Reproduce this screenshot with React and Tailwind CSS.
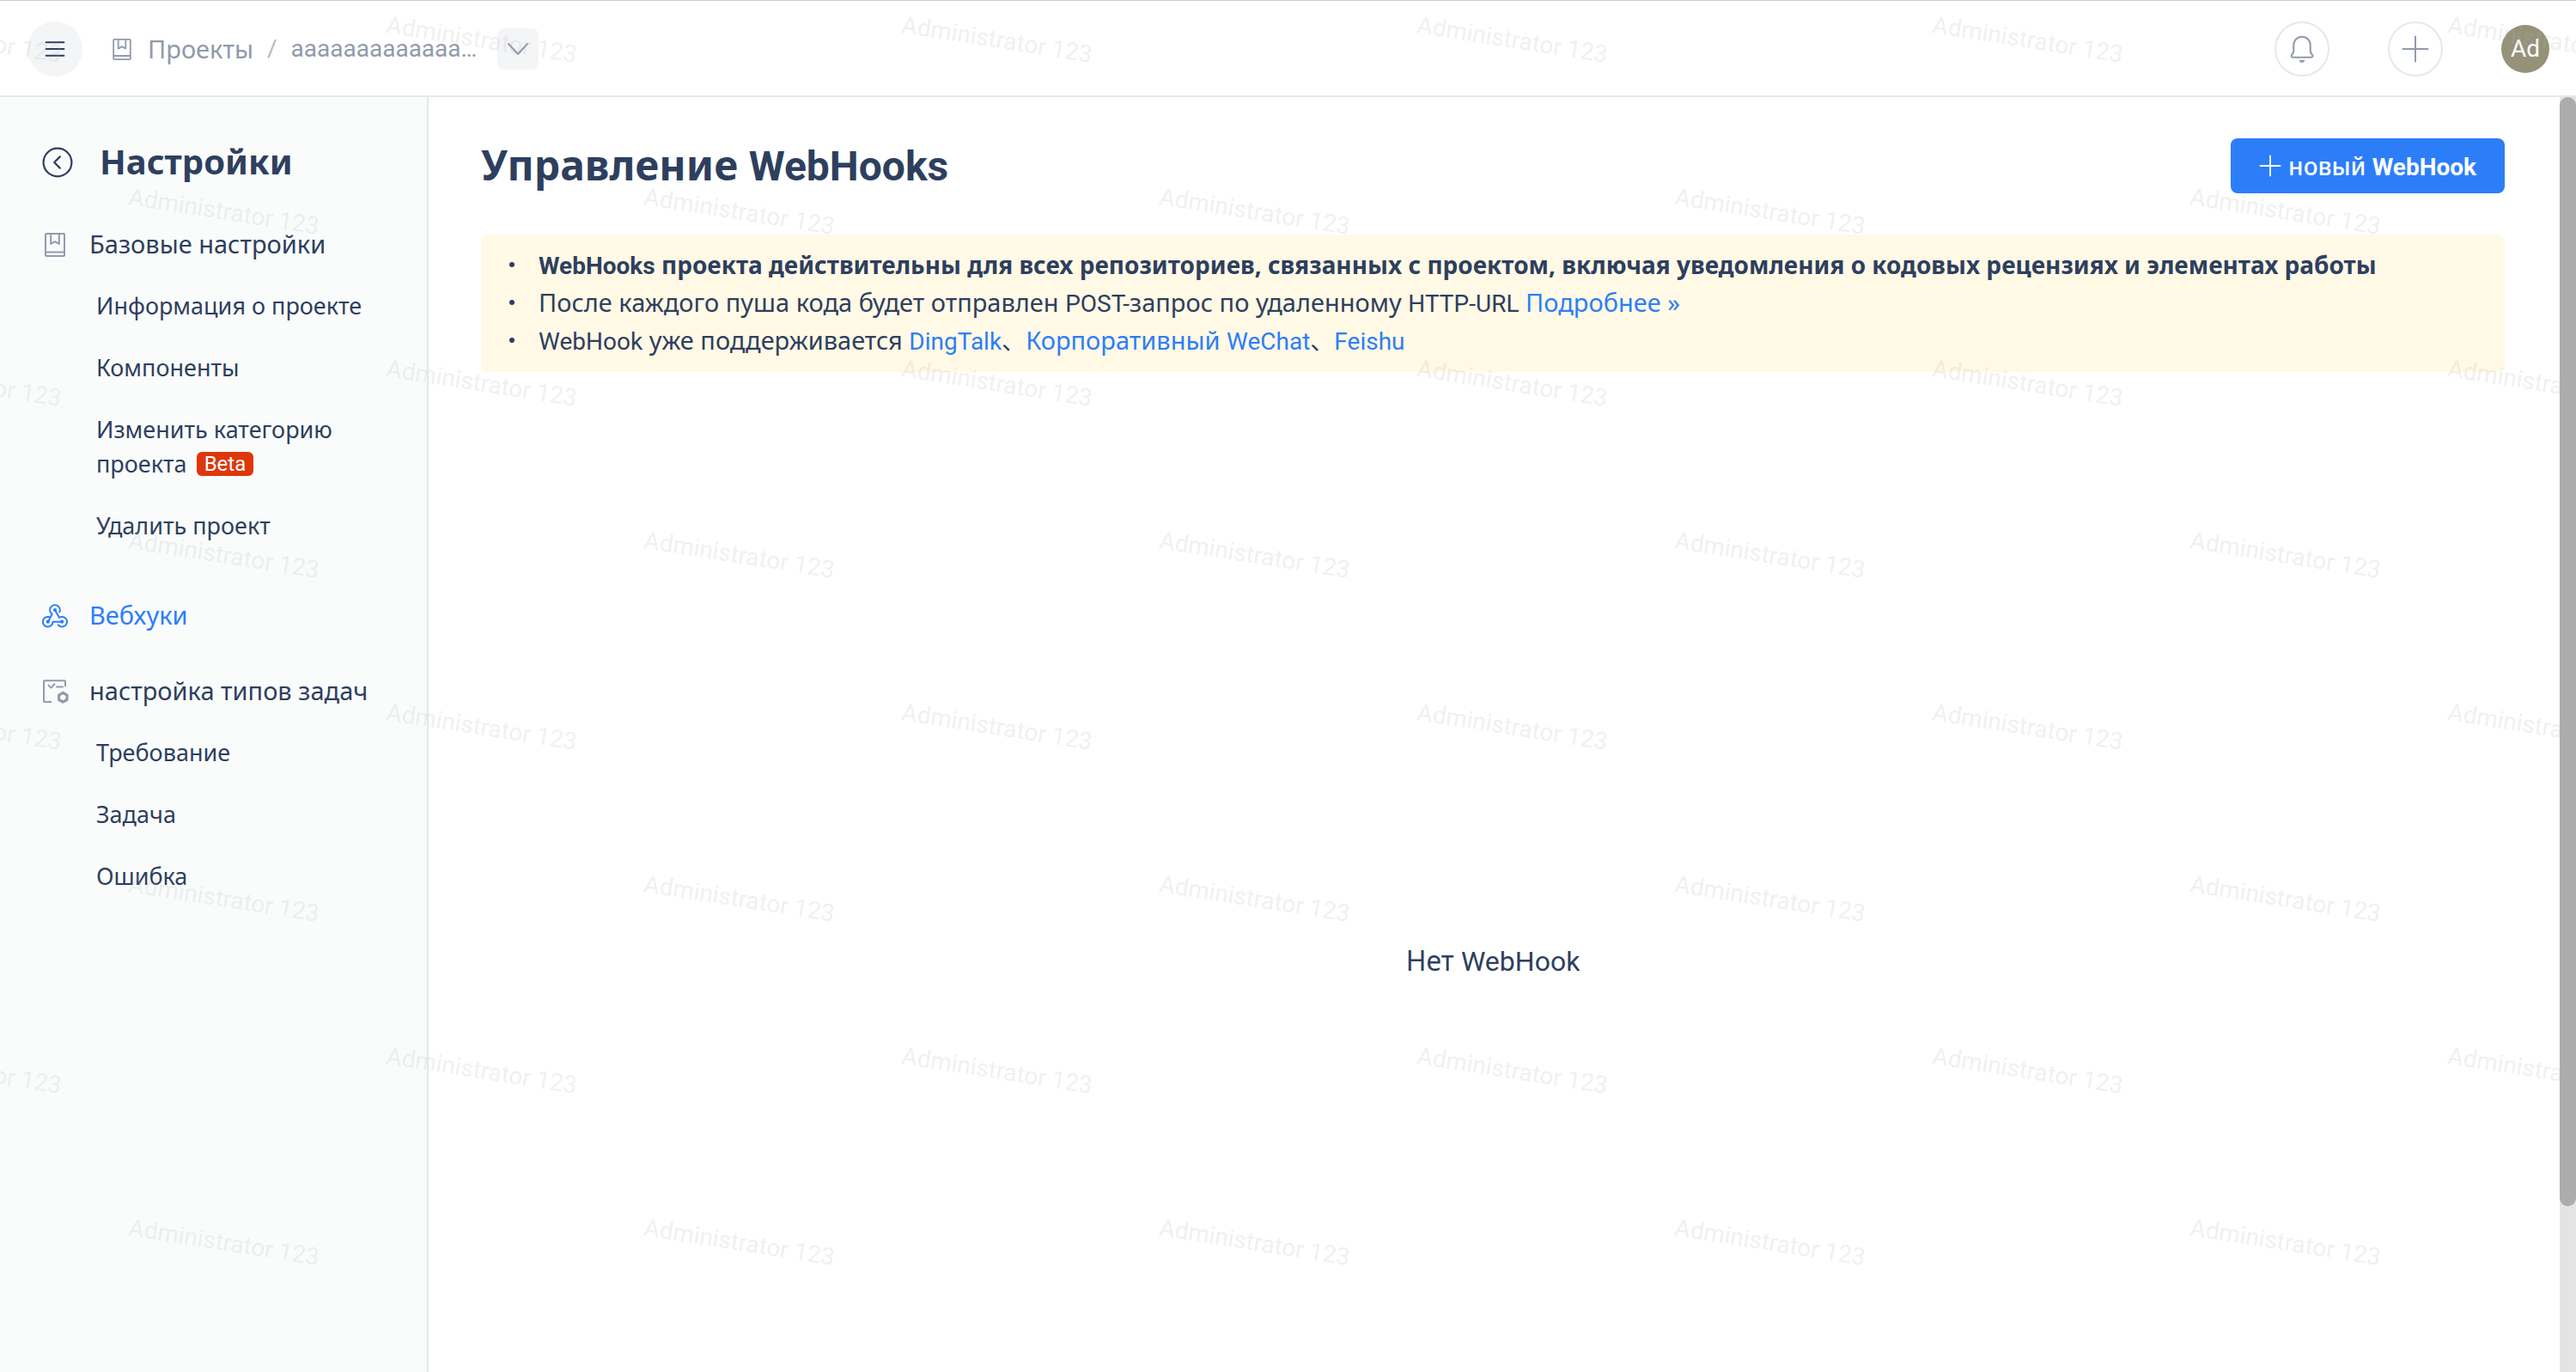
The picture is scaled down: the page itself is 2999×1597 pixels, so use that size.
import React from 'react';

const ROBOTO = 'font-[Roboto,sans-serif] leading-none';

function Lat({ children, className = '' }) {
  return <span className={`${ROBOTO} ${className}`}>{children}</span>;
}

function BookIcon({ className }) {
  return (
    <svg viewBox="0 0 24 28" className={className} fill="none" stroke="currentColor" strokeWidth="2" strokeLinejoin="round" aria-hidden="true">
      <rect x="1" y="1" width="22" height="26" rx="1" />
      <path d="M7.2 1v12l4.8-2.8 4.8 2.8V1M1 22.4h22" />
    </svg>
  );
}

function WebhookIcon() {
  return (
    <svg viewBox="0 0 30 28" className="w-[30px] h-7" fill="none" stroke="currentColor" strokeWidth="2" strokeLinecap="round" strokeLinejoin="round" aria-hidden="true">
      <path d="M20.3 9.3A5.8 5.8 0 1 0 11.7 11.8L6.9 20.7" />
      <path d="M8.7 15.3A5.8 5.8 0 1 0 12.5 20.7H23.2" />
      <path d="M18.8 24.4A5.8 5.8 0 1 0 20 15.9L15 7" />
      <g fill="currentColor" stroke="none">
        <circle cx="15" cy="7" r="2.1" />
        <circle cx="6.8" cy="20.7" r="2.1" />
        <circle cx="23.2" cy="20.7" r="2.1" />
      </g>
    </svg>
  );
}

function TaskTypeIcon() {
  return (
    <svg viewBox="0 0 32 28" className="h-7 w-8 shrink-0" fill="none" stroke="currentColor" strokeWidth="2" strokeLinecap="round" strokeLinejoin="round" aria-hidden="true">
      <path d="M28 7.6V2.200a.9.9 0 0 0-.9-.9H3.900a.9.9 0 0 0-.9.9V25a.9.9 0 0 0 .9.9h7.400" />
      <path d="M8.500 6.600l3 3 4-4.300M18 8.400h7" />
      <path d="M25.300 15.400l4.700 2.700v5.400l-4.700 2.700-4.700-2.700v-5.400z" strokeWidth="3.200" />
    </svg>
  );
}

function BackIcon() {
  return (
    <svg viewBox="0 0 36 36" className="size-9" fill="none" stroke="currentColor" strokeWidth="2.2" strokeLinecap="round" strokeLinejoin="round" aria-hidden="true">
      <circle cx="18" cy="18" r="16.4" />
      <path d="M20.8 11.4L14.2 18l6.600 6.600" />
    </svg>
  );
}

function Header() {
  return (
    <header className="flex h-[113px] shrink-0 items-center border-t border-b-2 border-t-[#cbcbcb] border-b-[#e3e9ed] bg-white pt-0.5 pr-[31px] pl-8">
      <button type="button" aria-label="Меню" className="flex size-16 items-center justify-center rounded-full bg-[#f4f5f7]">
        <svg viewBox="0 0 24 24" className="size-6" fill="none" stroke="#2e3f5e" strokeWidth="2" strokeLinecap="round" aria-hidden="true">
          <path d="M1.600 4.300h20.800M1.600 12h20.800M1.600 19.700h20.800" />
        </svg>
      </button>
      <nav aria-label="Навигация" className="ml-[35px] flex items-center text-[#919aab]">
        <BookIcon className="h-[25px] w-[22px]" />
        <a href="#projects" className="ml-[19px] text-[29px] leading-10">Проекты</a>
        <Lat className="ml-4 text-[28px] text-[#b3bac4]">/</Lat>
        <a href="#project" className="ml-4 font-[Roboto,sans-serif] text-[28px] leading-10">aaaaaaaaaaaaa…</a>
        <button type="button" aria-label="Выбрать проект" className="ml-6 flex size-12 items-center justify-center rounded-lg bg-[#f4f5f7]">
          <svg viewBox="0 0 26 16" className="h-4 w-[26px]" fill="none" stroke="currentColor" strokeWidth="2" strokeLinecap="round" strokeLinejoin="round" aria-hidden="true">
            <path d="M2 2l11 12L24 2" />
          </svg>
        </button>
      </nav>
      <div className="ml-auto flex items-center gap-[68px] text-[#929aae]">
        <button type="button" aria-label="Уведомления" className="flex size-16 items-center justify-center rounded-full border-2 border-[#e3e9ed]">
          <svg viewBox="0 0 32 32" className="size-8" fill="none" stroke="currentColor" strokeWidth="2.1" strokeLinejoin="round" aria-hidden="true">
            <path d="M6.3 18v-6.6a9.7 9.7 0 0 1 19.4 0V18c0 2 .8 3 2.3 5 .9 1.3.3 2.7-1.4 2.7H5.4C3.7 25.7 3.1 24.3 4 23c1.5-2 2.3-3 2.3-5z" />
            <path d="M12.7 29h6.6c-.5 2-1.7 2.8-3.3 2.8s-2.8-.8-3.3-2.8z" fill="currentColor" stroke="none" />
          </svg>
        </button>
        <button type="button" aria-label="Создать" className="flex size-16 items-center justify-center rounded-full border-2 border-[#e3e9ed]">
          <svg viewBox="0 0 32 32" className="size-8" fill="none" stroke="currentColor" strokeWidth="2" strokeLinecap="round" aria-hidden="true">
            <path d="M16 1.5v29M1.5 16h29" />
          </svg>
        </button>
        <button type="button" className="flex size-14 items-center justify-center rounded-full bg-[#959279] font-[Roboto,sans-serif] text-[28px] leading-none text-white">Ad</button>
      </div>
    </header>
  );
}

function Section({ icon, children, className = '' }) {
  return (
    <a href="#section" className={`flex h-[72px] items-center gap-[25px] text-[29px] leading-10 ${className}`}>
      <span className="flex w-[30px] justify-center text-[#929aae]">{icon}</span>
      <span className="pb-0.5">{children}</span>
    </a>
  );
}

function SubItem({ children }) {
  return <li><a href="#item" className="block pt-[15px] pb-[17px] text-[27px] leading-10">{children}</a></li>;
}

function Sidebar() {
  return (
    <aside className="w-[499px] shrink-0 border-r-2 border-[#e3e8ee] bg-[#fafcfc] pt-10 pl-[49px]">
      <div className="mb-6 flex h-[72px] items-center gap-[31px]">
        <button type="button" aria-label="Назад"><BackIcon /></button>
        <h2 className="pb-0.5 text-[40px] leading-[56px] font-bold">Настройки</h2>
      </div>
      <nav aria-label="Настройки">
        <Section icon={<BookIcon className="h-7 w-6" />}>Базовые настройки</Section>
        <ul className="pr-16 pl-[63px]">
          <SubItem>Информация о проекте</SubItem>
          <SubItem>Компоненты</SubItem>
          <SubItem>
            Изменить категорию проекта{' '}
            <Lat className="mb-1.5 ml-1 inline-flex h-7 items-center rounded-md bg-[#de370b] px-[9px] align-middle text-[24px] text-white">Beta</Lat>
          </SubItem>
          <SubItem>Удалить проект</SubItem>
        </ul>
        <a href="#webhooks" className="mt-8 flex h-[72px] items-center gap-[25px] text-[29px] leading-10 text-[#2c7ef8]">
          <WebhookIcon />
          <span className="pb-0.5">Вебхуки</span>
        </a>
        <Section className="mt-4" icon={<TaskTypeIcon />}>настройка типов задач</Section>
        <ul className="pl-[63px]">
          <SubItem>Требование</SubItem>
          <SubItem>Задача</SubItem>
          <SubItem>Ошибка</SubItem>
        </ul>
      </nav>
    </aside>
  );
}

function Note({ children }) {
  return (
    <li className="flex items-center gap-7">
      <span className="size-1.5 shrink-0 rounded-full bg-[#2e3f5e]" />
      <div className="leading-[44px]">{children}</div>
    </li>
  );
}

function Link({ children, latin }) {
  return <a href="#docs" className={`text-[#2c7ef8] leading-none ${latin ? 'font-[Roboto,sans-serif] text-[28px]' : ''}`}>{children}</a>;
}

function Main() {
  return (
    <main className="min-w-0 flex-1 overflow-hidden bg-white pt-12 pr-16 pl-[61px]">
      <div className="flex h-16 items-center justify-between">
        <h1 className="pb-[3px] text-[48px] leading-[61px] font-bold">Управление <Lat>WebHooks</Lat></h1>
        <button type="button" className="flex h-16 items-center rounded-lg bg-[#2c7ef8] px-[33px] text-[28px] leading-10 text-white">
          <svg viewBox="0 0 26 26" className="mr-2 size-[26px]" fill="none" stroke="currentColor" strokeWidth="1.8" strokeLinecap="round" aria-hidden="true">
            <path d="M13 1.5v23M1.5 13h23" />
          </svg>
          <span className="font-medium">новый <Lat className="font-bold">WebHook</Lat></span>
        </button>
      </div>
      <ul className="mt-12 rounded-lg bg-[#fff9e6] pt-[13px] pr-8 pb-[15px] pl-[33px] text-[29px]">
        <Note><strong className="text-[28px] font-bold"><Lat>WebHooks</Lat> проекта действительны для всех репозиториев, связанных с проектом, включая уведомления о кодовых рецензиях и элементах работы</strong></Note>
        <Note>После каждого пуша кода будет отправлен <Lat className="text-[28px]">POST-</Lat>запрос по удаленному <Lat className="text-[28px]">HTTP-URL</Lat> <Link>Подробнее »</Link></Note>
        <Note>
          <Lat className="text-[28px]">WebHook</Lat> уже поддерживается <Link latin>DingTalk</Link>
          <span className="font-['Noto_Sans_CJK_SC',sans-serif] text-[28px] leading-none">、</span>
          <Link>Корпоративный <Lat className="text-[28px]">WeChat</Lat></Link>
          <span className="font-['Noto_Sans_CJK_SC',sans-serif] text-[28px] leading-none">、</span>
          <Link latin>Feishu</Link>
        </Note>
      </ul>
      <div className="flex h-[1370px] items-center justify-center">
        <p className="text-[32px] leading-[48px]">Нет <Lat>WebHook</Lat></p>
      </div>
    </main>
  );
}

function Watermark() {
  return (
    <div aria-hidden="true" className="pointer-events-none absolute inset-0 z-10 overflow-hidden select-none">
      {Array.from({ length: 8 }, (_, row) => (
        <div key={row} className={`flex h-[200px] pt-[13px] ${row % 2 ? 'pl-[150px]' : '-ml-[150px]'}`}>
          {Array.from({ length: row % 2 ? 5 : 6 }, (_, col) => (
            <span key={col} className="w-[600px] shrink-0">
              <span className="inline-block origin-left rotate-[9deg] font-[Roboto,sans-serif] text-[28px] leading-8 text-[#b4b4b4]/20">Administrator 123</span>
            </span>
          ))}
        </div>
      ))}
    </div>
  );
}

export default function App() {
  return (
    <div className="relative flex h-screen flex-col overflow-hidden font-['Noto_Sans',sans-serif] text-[#2e3f5e]">
      <Header />
      <div className="flex min-h-0 flex-1">
        <Sidebar />
        <Main />
        <div className="w-[19px] shrink-0 bg-[#e4e4e4]">
          <div className="h-[87%] rounded-full bg-[#acacac]" />
        </div>
      </div>
      <Watermark />
    </div>
  );
}
